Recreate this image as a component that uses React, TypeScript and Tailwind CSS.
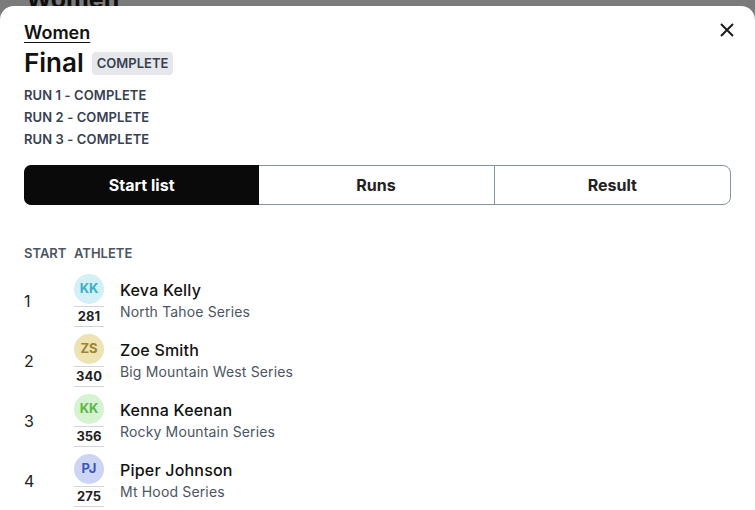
import React from "react";

const athletes = [
  { n: 1, init: "KK", bib: "281", name: "Keva Kelly", series: "North Tahoe Series", bg: "bg-[#d3f0f6]", fg: "text-[#3aafca]" },
  { n: 2, init: "ZS", bib: "340", name: "Zoe Smith", series: "Big Mountain West Series", bg: "bg-[#ede3b3]", fg: "text-[#9c8531]" },
  { n: 3, init: "KK", bib: "356", name: "Kenna Keenan", series: "Rocky Mountain Series", bg: "bg-[#d6f3d1]", fg: "text-[#5bb748]" },
  { n: 4, init: "PJ", bib: "275", name: "Piper Johnson", series: "Mt Hood Series", bg: "bg-[#ccd5f3]", fg: "text-[#3953c8]" },
];

export default function App() {
  return (
    <div className="w-[755px] h-[510px] overflow-hidden bg-[#7b7b7b] relative" style={{ fontFamily: "Inter, 'Noto Sans', sans-serif" }}>
      <div className="absolute left-[26px] top-[-13px] text-[25px] font-bold text-[#0e0e0e] leading-none">Women</div>
      <div className="absolute left-0 right-0 top-[6px] bottom-0 bg-white rounded-t-[14px] px-6 pt-[17px]">
        <button className="absolute right-[21px] top-[17px] text-[#1c1c1c]">
          <svg width="14" height="14" viewBox="0 0 14 14" fill="none" stroke="currentColor" strokeWidth="2">
            <path d="M1 1L13 13M13 1L1 13" />
          </svg>
        </button>
        <div className="text-[18px] font-semibold underline underline-offset-[3px] text-[#111] leading-[20px]">Women</div>
        <div className="flex items-center gap-2 mt-[4px]">
          <div className="text-[26px] font-semibold text-[#111] leading-[32px]">Final</div>
          <span className="bg-[#e5e7eb] rounded-[4px] px-[5px] h-[23px] flex items-center text-[13px] font-semibold text-[#374151] leading-none">COMPLETE</span>
        </div>
        <div className="mt-[5px] text-[13px] font-semibold text-[#374151] leading-[22px] tracking-[0.1px]">
          <div>RUN 1 - COMPLETE</div>
          <div>RUN 2 - COMPLETE</div>
          <div>RUN 3 - COMPLETE</div>
        </div>
        <div className="mt-[15px] flex h-[40px] w-[707px] rounded-lg border border-[#8594a2]">
          <div className="flex-1 bg-[#0a0a0a] text-white rounded-l-[7px] -m-px flex items-center justify-center text-[16px] font-bold">Start list</div>
          <div className="flex-1 border-r border-[#8594a2] flex items-center justify-center text-[16px] font-bold text-[#222]">Runs</div>
          <div className="flex-1 flex items-center justify-center text-[16px] font-bold text-[#222]">Result</div>
        </div>
        <div className="mt-[38px] flex text-[13px] font-semibold text-[#4b5563] leading-[20px]">
          <div className="w-[50px]">START</div>
          <div>ATHLETE</div>
        </div>
        <div className="mt-[11px] flex flex-col">
          {athletes.map((a) => (
            <div key={a.n} className="flex h-[60px]">
              <div className="w-[50px] flex items-start pt-[17px] text-[16px] text-[#222] leading-[20px]">{a.n}</div>
              <div className="w-[30px] flex flex-col items-center">
                <div className={`w-[30px] h-[30px] rounded-full ${a.bg} ${a.fg} flex items-center justify-center text-[13px] font-bold`}>{a.init}</div>
                <div className="mt-[2px] w-[30px] border-y border-[#d1d5db] text-center text-[13px] font-bold text-[#1f1f1f] leading-[19px]">{a.bib}</div>
              </div>
              <div className="ml-[16px] flex flex-col pt-[5px]">
                <div className="text-[16px] font-medium text-[#111] leading-[22px] tracking-[0.2px]">{a.name}</div>
                <div className="text-[14px] text-[#4b5563] leading-[22px] tracking-[0.15px]">{a.series}</div>
              </div>
            </div>
          ))}
        </div>
      </div>
    </div>
  );
}
